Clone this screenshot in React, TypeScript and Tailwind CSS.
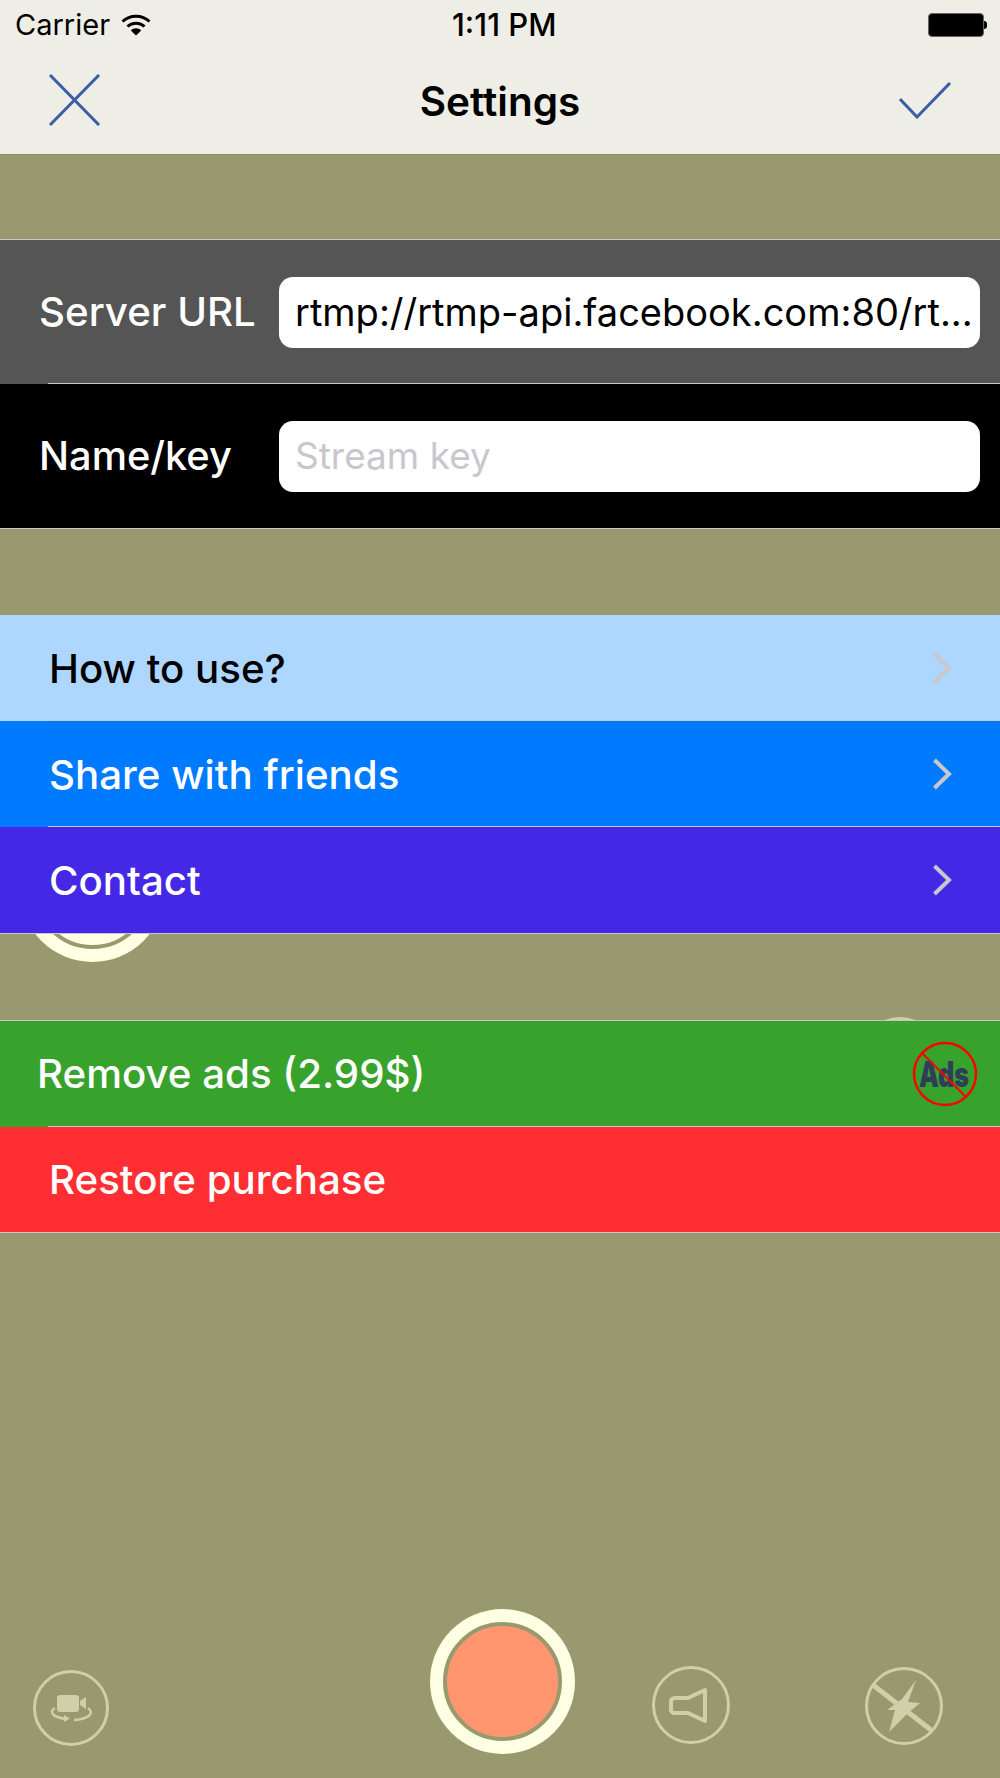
const iconColor = "#cfcfa8";

function Chevron() {
  return (
    <svg width="20" height="32" viewBox="0 0 20 32" fill="none" stroke="#c7c7cc" strokeWidth="4" className="shrink-0">
      <path d="M2.5 2L17 16L2.5 30" />
    </svg>
  );
}

function MenuRow({ label, className, inset }: { label: string; className: string; inset?: boolean }) {
  return (
    <div className={`relative flex h-[106px] items-center justify-between pl-[49px] pr-[48px] text-[40.250px] font-medium ${className}`}>
      <span className="mt-[3px]">{label}</span>
      <Chevron />
      {inset && <div className="absolute bottom-0 left-[48px] right-0 h-px bg-[#c8c7cc]" />}
    </div>
  );
}

function FlipCameraIcon() {
  return (
    <svg width="76" height="76" viewBox="0 0 76 76" fill="none">
      <circle cx="38" cy="38" r="36.500" stroke={iconColor} strokeWidth="3" />
      <rect x="24" y="25" width="22" height="17" rx="3" fill={iconColor} />
      <path d="M47 31L53 27V39L47 35Z" fill={iconColor} />
      <path d="M22 38C16 41 18 47 33 49" stroke={iconColor} strokeWidth="2.500" />
      <path d="M31 45L37 48.500L31 52Z" fill={iconColor} />
      <path d="M41 50C56 49 62 43 55 38" stroke={iconColor} strokeWidth="2.500" />
    </svg>
  );
}

function SpeakerIcon() {
  return (
    <svg width="78" height="78" viewBox="0 0 78 78" fill="none" stroke={iconColor}>
      <circle cx="39" cy="39" r="37.500" strokeWidth="3" />
      <path d="M23 32H36L53 24V55L36 47H23C20.500 47 19 45.500 19 43.500V35.500C19 33.500 20.500 32 23 32Z" strokeWidth="4" strokeLinejoin="round" />
    </svg>
  );
}

function FlashOffIcon() {
  return (
    <svg width="78" height="78" viewBox="0 0 78 78" fill="none">
      <circle cx="39" cy="39" r="37.500" stroke={iconColor} strokeWidth="3" />
      <path d="M8 18L66 63" stroke={iconColor} strokeWidth="5" />
      <path d="M51 13L43 35L55 36L42 47L24 65L30 43L22 43L37 32Z" fill={iconColor} />
    </svg>
  );
}

function NoAdsLogo() {
  return (
    <svg width="66" height="66" viewBox="0 0 66 66" fill="none" className="shrink-0">
      <text x="7" y="46" textLength="50" lengthAdjust="spacingAndGlyphs" fill="#2f3e58" fontFamily="Inter, sans-serif" fontWeight="900" fontSize="35">Ads</text>
      <circle cx="33" cy="33" r="31" stroke="#ff0000" strokeWidth="2.500" />
      <path d="M10 12L54 56" stroke="#ff0000" strokeWidth="2" />
    </svg>
  );
}

function RecordRing({ fill }: { fill: string }) {
  return (
    <div className="flex h-[145px] w-[145px] items-center justify-center rounded-full bg-[#ffffe3]">
      <div className="h-[119px] w-[119px] rounded-full border-4 border-[#999970]" style={{ backgroundColor: fill }} />
    </div>
  );
}

export default function App() {
  return (
    <div className="relative flex h-[1778px] w-[1000px] flex-col overflow-hidden bg-[#999970] font-['Inter',sans-serif] text-white">
      {/* bits of the camera screen showing behind the settings rows */}
      <div className="absolute left-[20px] top-[817px]">
        <RecordRing fill="#ffffe3" />
      </div>
      <div className="absolute left-[861px] top-[1017px] h-[78px] w-[78px] rounded-full border-[3px] border-[#cfcfa8]" />

      {/* Nav bar */}
      <header className="relative h-[155px] shrink-0 border-b border-[#8f8f6a] bg-[#eeeee6] text-black">
        <div className="flex h-[50px] items-center justify-between pl-[15px] pr-[13px] text-[29px]">
          <div className="flex items-center gap-[11px]">
            <span>Carrier</span>
            <svg width="30" height="22" viewBox="0 0 30 22" fill="none" stroke="#000" strokeWidth="3">
              <path d="M1.500 7.500C9 0.500 21 0.500 28.500 7.500" />
              <path d="M6.500 12.500C11 8 19 8 23.500 12.500" />
              <path d="M15 21.500L9.800 16.500C12.500 13.500 17.500 13.500 20.200 16.500Z" fill="#000" stroke="none" />
            </svg>
          </div>
          <span className="absolute left-[452px] top-[2px] text-[31px] font-medium">1:11 PM</span>
          <div className="flex items-center">
            <div className="h-[24px] w-[56px] rounded-[4px] border border-[#666] bg-black" />
            <div className="h-[8px] w-[3px] rounded-r-full bg-black" />
          </div>
        </div>
        <div className="flex h-[104px] items-center justify-between pl-[48px] pr-[48px]">
          <svg width="53" height="52" viewBox="0 0 53 52" fill="none" stroke="#3b5ea6" strokeWidth="3" className="-mt-[4px]">
            <path d="M2 1L51 51M51 1L2 51" />
          </svg>
          <h1 className="text-[40.500px] font-semibold">Settings</h1>
          <svg width="53" height="37" viewBox="0 0 53 37" fill="none" stroke="#3b5ea6" strokeWidth="3" className="-mt-[3px]">
            <path d="M1 17L18 35L51 1" />
          </svg>
        </div>
      </header>

      {/* Server fields */}
      <section className="relative mt-[84px] border-y border-[#c8c7cc] font-medium">
        <div className="relative flex h-[144px] items-center bg-[#555555] pl-[39px] pr-[20px]">
          <span className="w-[240px] shrink-0 text-[40.250px]">Server URL</span>
          <div className="flex h-[71px] flex-1 items-center overflow-hidden rounded-[14px] bg-white pl-[16px] text-[38px] font-normal text-black">
            <span className="whitespace-nowrap">rtmp://rtmp-api.facebook.com:80/rt...</span>
          </div>
          <div className="absolute bottom-0 left-[48px] right-0 h-px bg-[#c8c7cc]" />
        </div>
        <div className="flex h-[144px] items-center bg-black pl-[39px] pr-[20px]">
          <span className="w-[240px] shrink-0 text-[39.750px]">Name/key</span>
          <div className="flex h-[71px] flex-1 items-center rounded-[14px] bg-white pl-[16px] text-[37px] font-normal text-[#c7c7cd]">
            Stream key
          </div>
        </div>
      </section>

      {/* Links */}
      <section className="relative mt-[86px] border-b border-[#c8c7cc]">
        <MenuRow label="How to use?" className="bg-[#aed7ff] text-black" inset />
        <MenuRow label="Share with friends" className="bg-[#007aff]" inset />
        <MenuRow label="Contact" className="bg-[#4528e6]" />
      </section>

      {/* Purchases */}
      <section className="relative mt-[86px] border-y border-[#c8c7cc] text-[40.250px] font-medium">
        <div className="relative flex h-[106px] items-center justify-between bg-[#38a32c] pl-[37px] pr-[22px]">
          <span>Remove ads (2.99$)</span>
          <NoAdsLogo />
          <div className="absolute bottom-0 left-[48px] right-0 h-px bg-[#c8c7cc]" />
        </div>
        <div className="flex h-[105px] items-center bg-[#ff2e32] pl-[49px]">
          <span className="mt-[2px]">Restore purchase</span>
        </div>
      </section>

      {/* Camera controls */}
      <div className="relative mt-auto flex h-[169px] items-start pl-[33px]">
        <div className="mt-[61px]">
          <FlipCameraIcon />
        </div>
        <div className="ml-[321px]">
          <RecordRing fill="#ff9670" />
        </div>
        <div className="ml-[77px] mt-[57px]">
          <SpeakerIcon />
        </div>
        <div className="ml-[135px] mt-[58px]">
          <FlashOffIcon />
        </div>
      </div>
    </div>
  );
}
